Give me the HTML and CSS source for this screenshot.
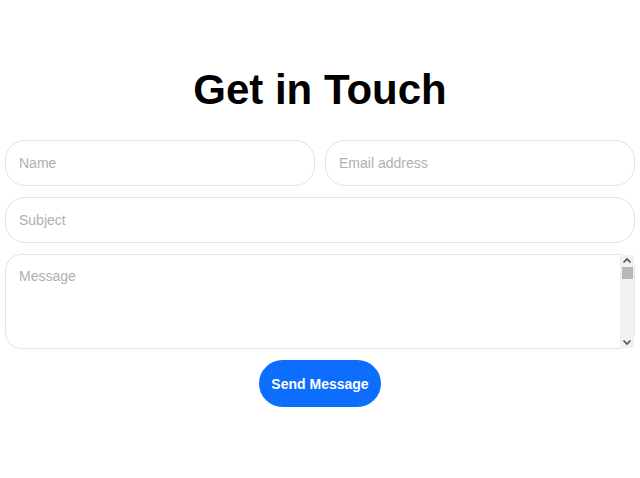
FILE: index.html
```html
<!DOCTYPE html>
<html lang="en">
<head>
<meta charset="utf-8">
<title>Get in Touch</title>
<link rel="stylesheet" href="styles.css">
</head>
<body>
<main class="contact">
  <h1 class="title">Get in Touch</h1>
  <form class="form">
    <div class="row">
      <input class="field" type="text" placeholder="Name">
      <input class="field" type="email" placeholder="Email address">
    </div>
    <input class="field" type="text" placeholder="Subject">
    <div class="area-wrap">
      <textarea class="field area" placeholder="Message"></textarea>
      <div class="scrollbar" aria-hidden="true">
        <svg class="arrow" viewBox="0 0 14 12" width="14" height="12"><path d="M3.5 7.5 L7 4 L10.5 7.5" fill="none" stroke="#505050" stroke-width="1.6"/></svg>
        <div class="thumb"></div>
        <div class="track"></div>
        <svg class="arrow" viewBox="0 0 14 12" width="14" height="12"><path d="M3.5 4.5 L7 8 L10.5 4.5" fill="none" stroke="#505050" stroke-width="1.6"/></svg>
      </div>
    </div>
    <button class="send" type="button">Send Message</button>
  </form>
</main>
</body>
</html>
```
FILE: styles.css
```css
html, body {
  margin: 0;
  padding: 0;
  background: #fff;
}
body {
  font-family: "Liberation Sans", Arial, sans-serif;
}
.contact {
  padding: 66px 5px 0;
}
.title {
  margin: 0 0 26px;
  text-align: center;
  font-size: 42px;
  font-weight: 700;
  line-height: 48px;
  color: #000;
}
.form {
  display: flex;
  flex-direction: column;
  gap: 11px;
}
.row {
  display: grid;
  grid-template-columns: 1fr 1fr;
  gap: 10px;
}
.field {
  box-sizing: border-box;
  width: 100%;
  height: 46px;
  margin: 0;
  padding: 0 13px;
  border: 1px solid #e3e3e3;
  border-radius: 20px;
  font-family: inherit;
  font-size: 14px;
  color: #333;
  background: #fff;
  outline: none;
}
.field::placeholder {
  color: #b0b0b0;
}
.area-wrap {
  position: relative;
  height: 95px;
}
.area {
  display: block;
  height: 95px;
  padding: 13px 28px 13px 13px;
  border-radius: 16px;
  resize: none;
  overflow: hidden;
}
.scrollbar {
  position: absolute;
  top: 1px;
  right: 1px;
  bottom: 1px;
  width: 14px;
  display: flex;
  flex-direction: column;
  background: #f1f1f1;
}
.arrow {
  display: block;
  flex: none;
}
.thumb {
  flex: none;
  height: 12px;
  margin: 0 1px 0 2px;
  background: #b8b8b8;
}
.track {
  flex: 1;
}
.send {
  align-self: center;
  height: 47px;
  padding: 0 12px;
  border: none;
  border-radius: 24px;
  background: #0d6efd;
  color: #fff;
  font-family: inherit;
  font-size: 14px;
  font-weight: 700;
  cursor: pointer;
}
```
